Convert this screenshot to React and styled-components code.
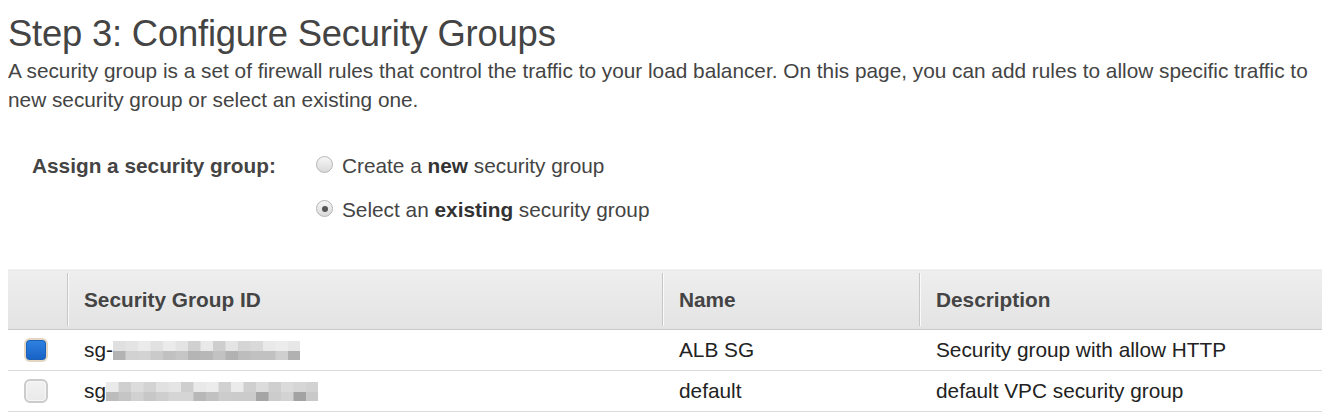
import styled, { createGlobalStyle } from "styled-components"

const GlobalStyle = createGlobalStyle`
    body {
        margin: 0;
        background: #fff;
        font-family: "Liberation Sans", Arial, sans-serif;
    }
`

const groups = [
    { id: 1, checked: true, name: "ALB SG", description: "Security group with allow HTTP", blocks: 15, seed: 3, dash: true },
    { id: 2, checked: false, name: "default", description: "default VPC security group", blocks: 17, seed: 7, dash: false },
]

const shade = (i, seed, base, spread) => {
    const v = Math.abs(Math.sin((i + 1) * 12.9898 + seed * 78.233)) * 43758.5453
    const n = v - Math.floor(v)
    const c = Math.round(base - n * spread)
    return `rgb(${c},${c},${c})`
}

const Redacted = ({ blocks, seed }) => {
    const w = 12.5
    return (
        <svg width={blocks * w} height="20" viewBox={`0 0 ${blocks * w} 20`}>
            {Array.from({ length: blocks }).map((_, i) => (
                <g key={i}>
                    <rect x={i * w} y="0" width={w + 0.5} height="10" fill={shade(i, seed, 238, 34)} />
                    <rect x={i * w} y="10" width={w + 0.5} height="9" fill={shade(i + 40, seed, 214, 52)} />
                </g>
            ))}
        </svg>
    )
}

const App = () => {
    return (
        <Page>
            <GlobalStyle />
            <Title>Step 3: Configure Security Groups</Title>
            <Intro>
                A security group is a set of firewall rules that control the traffic to your load balancer. On this page, you can add rules to allow specific traffic to
                <br />
                new security group or select an existing one.
            </Intro>
            <AssignRow>
                <Label>Assign a security group:</Label>
                <Options>
                    <Option>
                        <Radio />
                        <span>
                            Create a <b>new</b> security group
                        </span>
                    </Option>
                    <Option>
                        <Radio checked />
                        <span>
                            Select an <b>existing</b> security group
                        </span>
                    </Option>
                </Options>
            </AssignRow>
            <Table>
                <colgroup>
                    <col style={{ width: 59 }} />
                    <col style={{ width: 595 }} />
                    <col style={{ width: 257 }} />
                    <col />
                </colgroup>
                <thead>
                    <tr>
                        <Th />
                        <Th divider>Security Group ID</Th>
                        <Th divider>Name</Th>
                        <Th divider>Description</Th>
                    </tr>
                </thead>
                <tbody>
                    {groups.map((g) => (
                        <Row key={g.id}>
                            <CheckCell>
                                <Checkbox checked={g.checked} />
                            </CheckCell>
                            <Td>
                                <IdWrap>
                                    {g.dash ? "sg-" : "sg"}
                                    <Redacted blocks={g.blocks} seed={g.seed} />
                                </IdWrap>
                            </Td>
                            <Td>{g.name}</Td>
                            <Td>{g.description}</Td>
                        </Row>
                    ))}
                </tbody>
            </Table>
        </Page>
    )
}

const Page = styled.div`
    padding: 14px 0 0 8px;
    color: #444;
    overflow: hidden;
    height: 412px;
    box-sizing: border-box;
`

const Title = styled.h1`
    margin: 0;
    font-size: 36.4px;
    font-weight: normal;
    line-height: 40px;
    letter-spacing: -0.2px;
    color: #444;
`

const Intro = styled.p`
    margin: 2px 0 0;
    font-size: 20.8px;
    line-height: 29px;
    color: #444;
    white-space: nowrap;
`

const AssignRow = styled.div`
    display: flex;
    margin-top: 37px;
    padding-left: 24px;
    font-size: 20.8px;
    line-height: 29px;
`

const Label = styled.div`
    width: 284px;
    font-weight: bold;
    color: #444;
`

const Options = styled.div`
    display: flex;
    flex-direction: column;
    gap: 15px;
`

const Option = styled.label`
    display: flex;
    align-items: center;
    gap: 9px;
    color: #444;
    b {
        color: #333;
    }
`

const Radio = styled.span`
    width: 17px;
    height: 17px;
    border-radius: 50%;
    box-sizing: border-box;
    border: 1px solid #b4b4b4;
    background: linear-gradient(#f6f6f6, #dadada);
    position: relative;
    margin-top: -2px;
    &::after {
        content: "";
        display: ${(p) => (p.checked ? "block" : "none")};
        position: absolute;
        left: 4.5px;
        top: 4.5px;
        width: 6px;
        height: 6px;
        border-radius: 50%;
        background: #555;
    }
`

const Table = styled.table`
    margin-top: 45px;
    width: 100%;
    border-collapse: collapse;
    table-layout: fixed;
    font-size: 20.8px;
`

const Th = styled.th`
    position: relative;
    height: 60px;
    padding: 0 0 0 17px;
    text-align: left;
    font-weight: bold;
    color: #444;
    background: linear-gradient(#eeeeee, #e3e3e3);
    border-top: 1px solid #f2f2f2;
    border-bottom: 1px solid #c9c9c9;
    box-sizing: border-box;
    &::before {
        content: "";
        display: ${(p) => (p.divider ? "block" : "none")};
        position: absolute;
        left: 0;
        top: 3px;
        bottom: 3px;
        width: 1px;
        background: #c6c6c6;
        box-shadow: 1px 0 0 #fafafa;
    }
`

const Row = styled.tr`
    border-bottom: 1px solid #dcdcdc;
`

const Td = styled.td`
    height: 40px;
    padding: 0 0 0 17px;
    color: #222;
    white-space: nowrap;
`

const CheckCell = styled.td`
    height: 40px;
    padding: 0 0 0 16px;
`

const Checkbox = styled.span`
    display: block;
    width: 24px;
    height: 24px;
    box-sizing: border-box;
    border-radius: 6px;
    border: 2px solid ${(p) => (p.checked ? "#e4d6c0" : "#cbcbcb")};
    background: ${(p) => (p.checked ? "linear-gradient(#2f82e2, #1661c4)" : "linear-gradient(#f2f2f2, #e9e9e9)")};
    box-shadow: inset 0 0 0 1px ${(p) => (p.checked ? "#1a5fb8" : "#f7f7f7")};
`

const IdWrap = styled.span`
    display: inline-flex;
    align-items: center;
    svg {
        margin-top: 2px;
    }
`

export default App
